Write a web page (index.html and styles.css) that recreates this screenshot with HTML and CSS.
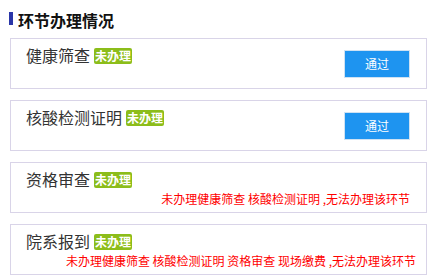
FILE: index.html
```html
<!DOCTYPE html>
<html lang="zh-CN">
<head>
  <meta charset="UTF-8" />
  <meta name="viewport" content="width=device-width, initial-scale=1.0" />
  <title>环节办理情况</title>
  <link rel="stylesheet" href="styles.css">
</head>
<body>
  <div class="section-title"><span class="bar"></span>环节办理情况</div>

  <div class="step">
    <div class="info">
      <div class="name-row"><span class="name">健康筛查</span><span class="tag">未办理</span></div>
    </div>
    <button class="pass">通过</button>
  </div>

  <div class="step">
    <div class="info">
      <div class="name-row"><span class="name">核酸检测证明</span><span class="tag">未办理</span></div>
    </div>
    <button class="pass">通过</button>
  </div>

  <div class="step">
    <div class="info">
      <div class="name-row"><span class="name">资格审查</span><span class="tag">未办理</span></div>
      <div class="note">未办理健康筛查 核酸检测证明 ,无法办理该环节</div>
    </div>
  </div>

  <div class="step">
    <div class="info">
      <div class="name-row"><span class="name">院系报到</span><span class="tag">未办理</span></div>
      <div class="note long">未办理健康筛查 核酸检测证明 资格审查 现场缴费 ,无法办理该环节</div>
    </div>
  </div>
</body>
</html>
```

FILE: styles.css
```css
body {
  margin: 0;
  background: #fff;
  font-family: "Noto Sans CJK SC", "Liberation Sans", sans-serif;
}
.section-title {
  display: flex;
  align-items: center;
  gap: 5px;
  margin: 10px 0 8px 9px;
  font-size: 16px;
  line-height: 20px;
  font-weight: bold;
  color: #111;
}
.section-title .bar {
  width: 4px;
  height: 13px;
  margin-top: -3px;
  background: #2a36a8;
}
.step {
  display: flex;
  align-items: center;
  box-sizing: border-box;
  height: 51px;
  margin: 0 5px 11px 10px;
  padding: 0 16px 0 15px;
  border: 1px solid #d9d4e8;
}
.info {
  flex: 1;
  align-self: stretch;
  padding-top: 5px;
}
.name-row {
  display: flex;
  align-items: center;
  height: 22px;
}
.name {
  font-size: 16px;
  line-height: 22px;
  color: #333;
}
.tag {
  margin: 2px 0 0 4px;
  padding: 0 1px;
  height: 16px;
  line-height: 16px;
  font-size: 12px;
  font-weight: bold;
  color: #fff;
  background: #8cbd1a;
  border-radius: 2px;
}
.note {
  margin-top: 1px;
  font-size: 12px;
  line-height: 16px;
  color: #f00;
  text-align: right;
  white-space: nowrap;
}
.note.long {
  margin-right: -6px;
}
.pass {
  width: 66px;
  height: 28px;
  padding: 0;
  border: 1px solid #cfe2f3;
  background: #1e94f0;
  color: #fff;
  font-family: inherit;
  font-size: 12px;
  cursor: pointer;
}
```
